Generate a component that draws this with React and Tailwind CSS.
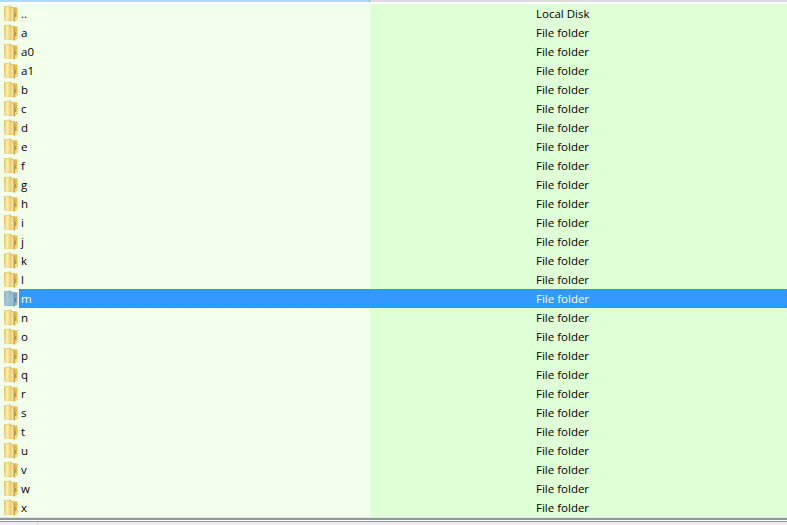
import React from 'react';

const names = ['a', 'a0', 'a1', 'b', 'c', 'd', 'e', 'f', 'g', 'h', 'i', 'j', 'k', 'l', 'm', 'n', 'o', 'p', 'q', 'r', 's', 't', 'u', 'v', 'w', 'x'];

function FolderIcon({ selected }) {
  const id = selected ? 'sel' : 'nor';
  const stops = selected
    ? ['#a9c9d6', '#8fb4c9', '#b9d2dc', '#7ea6c2', '#5f93b8']
    : ['#fdf0b4', '#e6c568', '#fdf3c4', '#e2bd5a', '#c79f3e'];
  return (
    <svg width="14" height="17" viewBox="0 0 14 17" className="shrink-0">
      <defs>
        <linearGradient id={id + 'a'} x1="0" x2="1" y1="0" y2="0">
          <stop offset="0" stopColor={stops[1]} />
          <stop offset="0.35" stopColor={stops[0]} />
          <stop offset="1" stopColor={stops[1]} />
        </linearGradient>
        <linearGradient id={id + 'b'} x1="0" x2="1" y1="0" y2="0">
          <stop offset="0" stopColor={stops[2]} />
          <stop offset="1" stopColor={stops[3]} />
        </linearGradient>
      </defs>
      {/* back of the folder */}
      <path d="M0 1.5 L6.5 0.5 L8 2 L13.5 2.5 L13.5 15 L9 16 L0.5 16 Z" fill={stops[3]} />
      {/* left leaf */}
      <path d="M0.5 2 L6.5 1 L7.5 15.5 L1 16 Z" fill={`url(#${id}a)`} />
      {/* open flap */}
      <path d="M7.5 2.5 L10 4 L10 16.5 L7.5 15.5 Z" fill={`url(#${id}b)`} />
      <rect x="10" y="4" width="1" height="12.5" fill={stops[4]} />
      {/* teal mark on the flap */}
      <rect x="11" y="8" width="1" height="4" fill={selected ? '#4f86ad' : '#5ab0c4'} />
      <rect x="11" y="12" width="2" height="3" fill={stops[0]} opacity="0.6" />
    </svg>
  );
}

function Row({ name }) {
  const selected = name === 'm';
  return (
    <div className="flex h-[19px]">
      <div className="flex w-[19px] pl-[4px] pt-px bg-[#f2ffeb] h-full">
        <FolderIcon selected={selected} />
      </div>
      <div className={selected ? 'flex flex-1 h-full items-center bg-[#3399ff] text-white outline-1 -outline-offset-1 outline-dotted outline-[#b0702c]' : 'flex flex-1 h-full items-center text-black'}>
        <div className={selected ? 'w-[351px] pl-[2px] h-full flex items-center' : 'w-[351px] pl-[2px] h-full flex items-center bg-[#f2ffeb]'}>{name}</div>
        <div className={selected ? 'flex-1 pl-[166px] h-full flex items-center' : 'flex-1 pl-[166px] h-full flex items-center bg-[#dfffd6]'}>File folder</div>
      </div>
    </div>
  );
}

export default function App() {
  return (
    <div className="w-[787px] h-[525px] overflow-hidden bg-white flex flex-col font-['Open_Sans','Noto_Sans',sans-serif] text-[11.5px]">
      <div className="flex h-[4px] shrink-0">
        <div className="w-[369px] h-[2px] bg-[#a9dcfb]" />
        <div className="w-px h-[2px] bg-[#7fb8e0]" />
        <div className="flex-1 h-[2px] bg-[#dcdcdc]" />
      </div>
      <div className="flex h-[19px] text-black">
        <div className="flex w-[370px] h-full bg-[#f2ffeb] pl-[4px] pt-px">
          <FolderIcon />
          <span className="ml-[3px]">..</span>
        </div>
        <div className="flex-1 h-full flex items-center pl-[166px] bg-[#dfffd6]">Local Disk</div>
      </div>
      {names.map(n => <Row key={n} name={n} />)}
      <div className="h-px bg-[#e6e6e6] shrink-0" />
      <div className="h-[2px] bg-[#8a9a9a] shrink-0" />
      <div className="h-px bg-white shrink-0" />
      <div className="h-px bg-[#8a9a9a] shrink-0" />
      <div className="flex-1 flex bg-[#f0ecef]">
        <div className="w-[38px] border-r border-[#d8d4d8]" />
      </div>
    </div>
  );
}
